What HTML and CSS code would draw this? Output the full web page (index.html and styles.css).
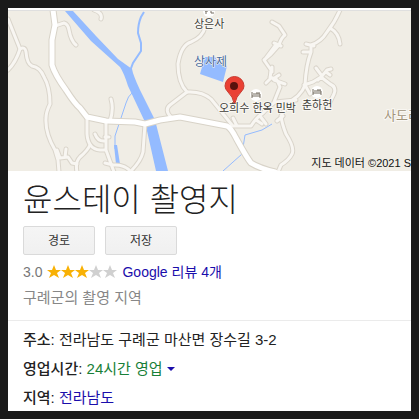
FILE: index.html
```html
<!DOCTYPE html>
<html lang="ko">
<head>
<meta charset="utf-8">
<meta name="viewport" content="width=device-width, initial-scale=1">
<title>윤스테이 촬영지</title>
<link rel="stylesheet" href="styles.css">
</head>
<body>
<main class="card">
  <div class="map">
    <svg class="map-art" viewBox="8 11 403 160" preserveAspectRatio="xMinYMin slice" role="img" aria-label="지도">
      <defs>
        <g id="minor">
          <path d="M8 19L14 34L20 49Q25 46 26 52Q27 64 32 66Q40 67 44 77Q50 87 50 104Q46 112 46 118Q45 133 55 150L58 160L59 172"/>
          <path d="M20 49Q16 62 8 70M55 26L64 23Q68 24 69 30Q71 41 76 45M94 10Q103 13 101 19"/>
          <path d="M111 99Q114 109 110 121M87 117V134Q88 149 100 150H106M106 121V150L114 172"/>
          <path d="M95 134Q98 142 105 141M105 137H109M90 145Q88 150 80 157Q75 162 77 172M57 150L60 158L68 157L72 163L77 164M66 149L65 157M105 163L113 165Q125 164 131 172"/>
          <path d="M145 124L143 152Q141 161 131 171"/>
          <path d="M205 27Q203 37 191 42Q181 45 178 64Q178 83 187 92Q202 91 211 99Q220 110 232 125"/>
          <path d="M187 92L170 105Q164 110 171 117M233 118L237 126M230 126L251 126Q256 118 263 113Q268 107 275 102L296 100M256 120L262 124M260 116L266 124"/>
          <path d="M340 10Q335 22 327 32Q321 42 311 45L311 52Q306 65 305 85Q301 97 285 104M330 28Q339 33 340 44M306 44L314 46M303 52H310"/>
          <path d="M272 22L279 26L285 35Q281 38 279 45L271 54L264 60L271 70L270 79L266 83M274 43L281 46M266 58L275 46M270 77L277 80L280 87L274 102M274 80L285 84M272 67V72M273 79L279 75"/>
          <path d="M316 68L322 76L327 70L331 69M326 72L330 75M304 85L313 82L321 77L330 84Q337 87 334 94L330 102M305 85L310 94M322 76L318 80"/>
          <path d="M288 104L281 116Q282 124 286 134Q295 148 292 154Q289 160 281 165L278 172M277 121L283 116"/>
        </g>
        <path id="major" d="M53 10L55 25L52 40V65Q55 75 66 90Q75 104 80 108L87 117L106 121L135 122L145 124L160 120L180 117L227 126Q231 128 236 138Q247 158 251 163Q259 168 275 172"/>
        <g id="lodging">
          <circle r="6" fill="#fff"/>
          <path d="M-4 -3V3M-4 1H4V3M-3 -1H4V1M0 -2H4" fill="none" stroke="#746d60"/>
        </g>
      </defs>
      <path class="land" d="M8 11H411V171H8Z"/>
      <path class="water" d="M65 11L91 41L120 67Q124 73 128 86L145 122L156 171H168L155 120L140 90Q133 75 132 69L118 59L96 36L73 11ZM205 57L200 74L223 82L227 66L220 64L215 57Z"/>
      <path class="stream" d="M144 12L141 17Q138 24 138 33L141 43V51L133 63L130 71"/>
      <path class="stream thin" d="M132 93Q128 96 126 103L115 136V149M272 124L262 130L245 135L242 154L223 171"/>
      <path class="water" d="M114 145H117L120 164H116Z"/>
      <use href="#minor" class="minor-edge"/>
      <use href="#major" class="major-edge"/>
      <use href="#minor" class="minor-fill"/>
      <use href="#major" class="major-fill"/>
      <circle cx="209" cy="11" r="6" fill="#fff"/>
      <path d="M206 11V14M205 11H208M211 11V13H214" fill="none" stroke="#746d60"/>
      <use href="#lodging" x="256" y="95"/>
      <use href="#lodging" x="317" y="92"/>
      <g class="place">
        <text x="194" y="28">상은사</text>
        <text class="lake" x="194" y="66">상사제</text>
        <text x="219" y="112">오희수 한옥 민박</text>
        <text x="302" y="109">춘하헌</text>
        <text class="district" x="384" y="120">사도리</text>
      </g>
      <path d="M234 103Q233 97 228 92Q225 89 225 86A9 9 0 0 1 244 86Q244 89 241 92Q236 97 235 103Z" fill="#ea4033" stroke="#c83b30" stroke-width="1"/>
      <circle cx="234" cy="86" r="4" fill="#5a120d"/>
    </svg>
    <span class="credit">지도 데이터 ©2021 S</span>
  </div>
  <section class="summary">
    <h1>윤스테이 촬영지</h1>
    <div class="actions">
      <button type="button">경로</button>
      <button type="button">저장</button>
    </div>
    <div class="rating">
      <span>3.0</span>
      <svg class="stars" viewBox="0 0 70 14" role="img" aria-label="별 5개 중 3개">
        <defs><path id="star" d="M7 0L9 5L14 5L10 8L12 13L7 10L2 13L4 8L0 5L5 5Z"/></defs>
        <g fill="#f8b105"><use href="#star"/><use href="#star" x="14"/><use href="#star" x="28"/></g>
        <g fill="#d0d0d0"><use href="#star" x="42"/><use href="#star" x="56"/></g>
      </svg>
      <a href="#reviews">Google 리뷰 4개</a>
    </div>
    <p class="kind">구례군의 촬영 지역</p>
  </section>
  <section class="details">
    <p><b>주소:</b> 전라남도 구례군 마산면 장수길 3-2</p>
    <p><b>영업시간:</b> <a class="hours" href="#hours">24시간 영업<span class="caret"></span></a></p>
    <p><b>지역:</b> <a href="#region">전라남도</a></p>
  </section>
</main>
</body>
</html>
```
FILE: styles.css
```css
* {
  box-sizing: border-box;
}

body {
  margin: 0;
  padding: 8px;
  min-height: 100vh;
  display: flex;
  background: #1a1a1a;
  color: #222;
  font: 15px/20px "Liberation Sans", "Noto Sans CJK KR", sans-serif;
}

.card {
  flex: 1;
  min-width: 0;
  padding-top: 2px;
  background: #fff;
}

h1,
p {
  margin: 0;
}

a {
  color: #1a0dab;
  text-decoration: none;
}

b {
  font-weight: 500;
}

.map {
  position: relative;
  border-top: 1px solid #dfdfdf;
  overflow: hidden;
}

.map-art {
  display: block;
  width: 100%;
}

.land {
  fill: #f0ede5;
}

.water {
  fill: #94bbff;
}

.stream {
  fill: none;
  stroke: #94bbff;
  stroke-width: 2;
}

.thin {
  stroke-width: 1;
}

.minor-edge,
.minor-fill,
.major-edge,
.major-fill {
  fill: none;
  stroke-linecap: round;
  stroke-linejoin: round;
}

.minor-edge {
  stroke: #dad5cb;
  stroke-width: 5;
}

.minor-fill {
  stroke: #f8f6f2;
  stroke-width: 3;
}

.major-edge {
  stroke: #d8d3c8;
  stroke-width: 7;
}

.major-fill {
  stroke: #fff;
  stroke-width: 5;
}

.place {
  fill: #403d38;
  stroke: #faf8f4;
  stroke-width: 2;
  paint-order: stroke;
  font-size: 11px;
}

.place .lake {
  fill: #4a6b9c;
  stroke-width: 1;
  font-size: 12px;
}

.place .district {
  fill: #a2957b;
  font-size: 13px;
}

.credit {
  position: absolute;
  right: 0;
  bottom: 0;
  font-size: 11px;
  line-height: 16px;
  color: #111;
}

.summary {
  padding: 9px 15px 12px;
  border-bottom: 1px solid #ebebeb;
}

h1 {
  font-size: 32px;
  line-height: 40px;
  font-weight: 300;
}

.actions {
  display: flex;
  gap: 10px;
  margin-top: 6px;
}

button {
  width: 72px;
  height: 29px;
  padding: 0;
  border: 1px solid #dadada;
  border-radius: 2px;
  background: linear-gradient(#f5f5f5, #f0f0f0);
  color: #333;
  font: 12px/20px "Liberation Sans", "Noto Sans CJK KR", sans-serif;
}

.rating {
  display: flex;
  align-items: center;
  gap: 5px;
  margin-top: 7px;
  font-size: 14px;
  color: #777;
}

.stars {
  width: 70px;
  height: 14px;
}

.kind {
  margin-top: 6px;
  color: #878787;
}

.details {
  display: grid;
  gap: 9px;
  padding: 9px 15px 3px;
}

.details .hours {
  color: #188038;
}

.caret {
  display: inline-block;
  margin-left: 4px;
  border: 4px solid transparent;
  border-top-color: #1a0dab;
  border-bottom: 0;
  vertical-align: 3px;
}
```
